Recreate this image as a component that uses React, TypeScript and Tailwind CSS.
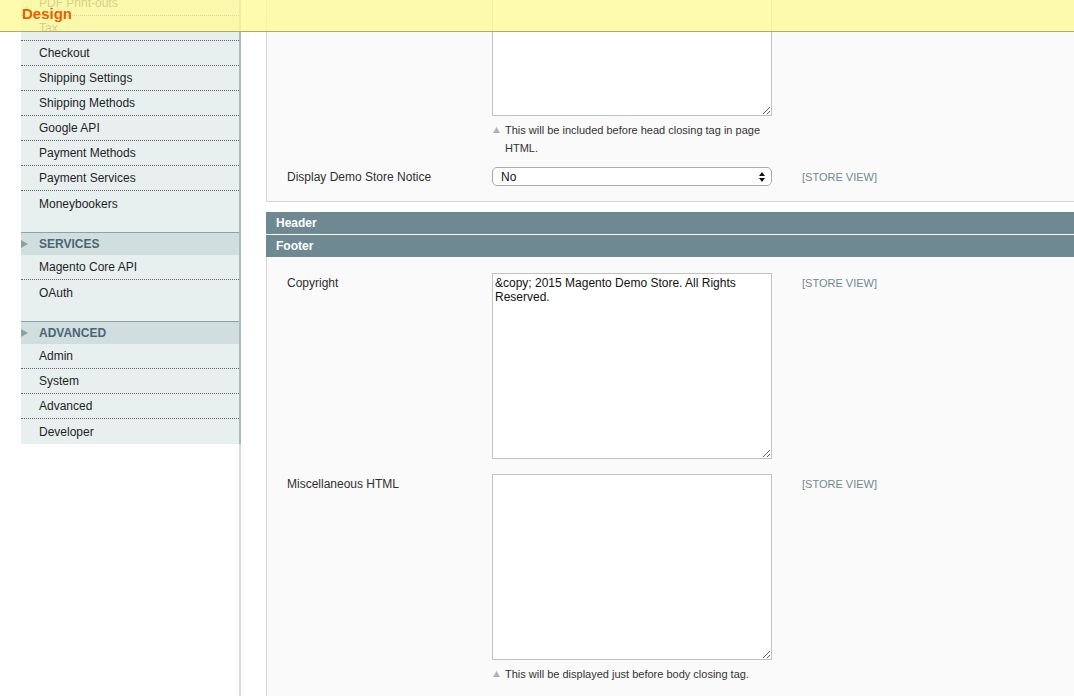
import * as React from "react";

const groups = [
  {
    title: null as string | null,
    items: [
      "PDF Print-outs",
      "Tax",
      "Checkout",
      "Shipping Settings",
      "Shipping Methods",
      "Google API",
      "Payment Methods",
      "Payment Services",
      "Moneybookers",
    ],
    pad: true,
  },
  { title: "Services", items: ["Magento Core API", "OAuth"], pad: true },
  { title: "Advanced", items: ["Admin", "System", "Advanced", "Developer"], pad: false },
];

function Hint({ children }: { children: React.ReactNode }) {
  return (
    <div className="mt-[5px] flex text-[11px] leading-[18px] text-[#333]">
      <span className="w-[13px] shrink-0 pl-[1px] pt-[6px]">
        <svg width="7" height="6" viewBox="0 0 7 6" className="block">
          <path d="M3.5 0 L7 6 L0 6 Z" fill="#a7b4ba" />
        </svg>
      </span>
      <span>{children}</span>
    </div>
  );
}

function Row({
  label,
  scope = true,
  className = "",
  children,
}: {
  label: string;
  scope?: boolean;
  className?: string;
  children: React.ReactNode;
}) {
  return (
    <div className={"flex " + className}>
      <div className="w-[205px] shrink-0 pt-px text-[12px] leading-[18px] text-[#2f2f2f]">{label}</div>
      <div className="w-[280px] shrink-0">{children}</div>
      {scope && (
        <div className="ml-[30px] pt-px text-[11px] leading-[18px] text-[#6f8992]">[STORE VIEW]</div>
      )}
    </div>
  );
}

function Area({ value = "" }: { value?: string }) {
  return (
    <textarea
      readOnly
      defaultValue={value}
      className="block h-[186px] w-[280px] border border-[#c2c2c2] bg-white p-[2px] text-[12px] leading-[14px] text-[#111] outline-none"
    />
  );
}

export default function App() {
  return (
    <div className="relative flex h-[696px] w-full overflow-hidden bg-white font-['Liberation_Sans',Arial,sans-serif]">
      {/* Left nav */}
      <div className="flex w-[241px] shrink-0 flex-col">
        <nav className="-mt-[9px] ml-[21px] w-[220px] border-r-2 border-[#a9bbbb] bg-[#e7efef]">
          {groups.map((g, gi) => (
            <div key={gi}>
              {g.title && (
                <div className="flex h-[23px] items-center border-t border-[#8fa2a8] bg-[#d1dede]">
                  <svg width="7" height="8" viewBox="0 0 7 8">
                    <path d="M0 0 L7 4 L0 8 Z" fill="#8aa2a9" />
                  </svg>
                  <span className="ml-[11px] text-[12px] font-bold uppercase text-[#4a6578]">
                    {g.title}
                  </span>
                </div>
              )}
              <ul className={g.pad ? "pb-[16px]" : ""}>
                {g.items.map((it, i) => (
                  <li
                    key={it}
                    className={
                      "flex h-[25px] items-center pl-[18px] text-[12px] text-[#1f1f1f] " +
                      (i < g.items.length - 1 ? "border-b border-dotted border-[#666]" : "")
                    }
                  >
                    {it}
                  </li>
                ))}
              </ul>
            </div>
          ))}
        </nav>
        <div className="ml-[21px] w-[220px] flex-1 border-r-2 border-[#d6dada]" />
      </div>

      {/* Main content */}
      <div className="flex min-w-0 flex-1 flex-col pl-[25px]">
        <div className="-mr-[10px] -mt-[86px] border border-[#d6d6d6] bg-[#fafafa] pb-[15px] pl-[20px] pt-[15px]">
          <Row label="Miscellaneous Scripts">
            <Area />
            <Hint>This will be included before head closing tag in page HTML.</Hint>
          </Row>
          <Row label="Display Demo Store Notice" className="mt-[10px]">
            <div className="flex h-[19px] items-center justify-between rounded-[5px] border border-[#aaa] bg-white pl-[8px] pr-[6px] text-[12px] text-[#111]">
              <span>No</span>
              <svg width="6" height="10" viewBox="0 0 6 10">
                <path d="M3 0 L6 4 L0 4 Z M0 6 L6 6 L3 10 Z" fill="#111" />
              </svg>
            </div>
          </Row>
        </div>

        <div className="-mr-[10px] mt-[10px] h-[22px] bg-[#6f8992] pl-[10px] text-[12px] font-bold leading-[22px] text-white">
          Header
        </div>
        <div className="-mr-[10px] mt-px h-[22px] bg-[#6f8992] pl-[10px] text-[12px] font-bold leading-[22px] text-white">
          Footer
        </div>

        <div className="-mr-[10px] flex-1 border-l border-[#d6d6d6] bg-[#fafafa] pl-[20px] pt-[16px]">
          <Row label="Copyright">
            <Area value={"&copy; 2015 Magento Demo Store. All Rights Reserved."} />
          </Row>
          <Row label="Miscellaneous HTML" className="mt-[15px]">
            <Area />
            <Hint>This will be displayed just before body closing tag.</Hint>
          </Row>
        </div>
      </div>

      {/* Floating section header */}
      <div className="absolute inset-x-0 top-0 h-[32px] border-b border-[#b3a66c] bg-[#fffa9a]/80 pl-[22px] pt-[5px]">
        <h3 className="text-[15px] font-bold leading-[18px] text-[#eb5e00]">Design</h3>
      </div>
    </div>
  );
}
